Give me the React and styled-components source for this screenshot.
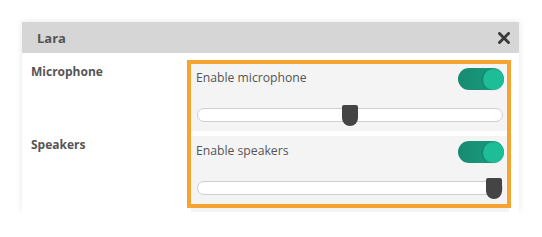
import React, { useState } from 'react';
import styled, { createGlobalStyle } from 'styled-components';

const GlobalStyle = createGlobalStyle`
  body {
    margin: 0;
    background: #fff;
    font-family: "Open Sans", "Liberation Sans", sans-serif;
  }
`;

const Page = styled.div`
  padding: 22px 0 0 22px;
`;

const Dialog = styled.div`
  position: relative;
  width: 497px;
  background: #fff;
  box-shadow: 0 0 7px rgba(0, 0, 0, 0.1);
`;

const Header = styled.div`
  height: 31px;
  display: flex;
  align-items: center;
  justify-content: space-between;
  padding: 0 9px 0 15px;
  background: #d6d6d6;
`;

const Title = styled.div`
  font-size: 13px;
  font-weight: 700;
  color: #555;
`;

const CloseButton = styled.button`
  display: flex;
  padding: 0;
  border: none;
  background: none;
  cursor: pointer;
`;

const Body = styled.div`
  display: grid;
  grid-template-columns: 160px 318px;
  row-gap: 5px;
  padding: 10px 10px 0 9px;
`;

const Label = styled.div`
  font-size: 12px;
  font-weight: 700;
  color: #555;
`;

const Panel = styled.div`
  background: #f4f4f4;
  padding: 4px 5px ${p => p.$bottom}px 5px;
`;

const ToggleRow = styled.div`
  display: flex;
  align-items: flex-start;
  justify-content: space-between;
`;

const ToggleText = styled.span`
  margin-top: 1.5px;
  font-size: 12.2px;
  color: #555;
`;

const Toggle = styled.button`
  position: relative;
  width: 46px;
  height: 22px;
  margin-top: 1px;
  padding: 0;
  border: none;
  border-radius: 11px;
  background: ${p => (p.$on ? 'linear-gradient(90deg, #178b70, #1a9f82)' : '#bbb')};
  cursor: pointer;

  &::after {
    content: '';
    position: absolute;
    top: 0.5px;
    left: ${p => (p.$on ? '25px' : '0')};
    width: 21px;
    height: 21px;
    border-radius: 50%;
    background: #1dbd98;
    box-shadow: -1px 0 2px rgba(0, 0, 0, 0.15);
  }
`;

const Slider = styled.div`
  position: relative;
  height: 21px;
  margin: 15px 1px 0;
`;

const Track = styled.div`
  position: absolute;
  top: 3px;
  left: 0;
  right: 0;
  height: 14px;
  box-sizing: border-box;
  border: 1px solid #cfcfcf;
  border-radius: 7px;
  background: #fff;
`;

const Thumb = styled.div`
  position: absolute;
  top: 0;
  width: 16px;
  height: 21px;
  border-radius: 2px 2px 8px 8px;
  background: #444;
`;

const Highlight = styled.div`
  position: absolute;
  left: 165px;
  top: 38px;
  width: 324px;
  height: 148px;
  box-sizing: border-box;
  border: 4px solid #f5a431;
  pointer-events: none;
`;

const CloseIcon = () => (
  <svg width="12" height="12" viewBox="0 0 12 12">
    <path d="M1.5 1.5 L10.5 10.5 M10.5 1.5 L1.5 10.5" stroke="#3a3a3a" strokeWidth="2.8" strokeLinecap="square" />
  </svg>
);

const devices = [
  { label: 'Microphone', text: 'Enable microphone', value: 0.5, bottom: 5 },
  { label: 'Speakers', text: 'Enable speakers', value: 1, bottom: 13 },
];

export default function App() {
  const [enabled, setEnabled] = useState([true, true]);

  return (
    <Page>
      <GlobalStyle />
      <Dialog>
        <Header>
          <Title>Lara</Title>
          <CloseButton aria-label="Close">
            <CloseIcon />
          </CloseButton>
        </Header>
        <Body>
          {devices.map((d, i) => (
            <React.Fragment key={d.label}>
              <Label>{d.label}</Label>
              <Panel $bottom={d.bottom}>
                <ToggleRow>
                  <ToggleText>{d.text}</ToggleText>
                  <Toggle
                    $on={enabled[i]}
                    onClick={() => setEnabled(e => e.map((v, j) => (j === i ? !v : v)))}
                  />
                </ToggleRow>
                <Slider>
                  <Track />
                  <Thumb style={{ left: `calc((100% - 18px) * ${d.value} + 1px)` }} />
                </Slider>
              </Panel>
            </React.Fragment>
          ))}
        </Body>
        <Highlight />
      </Dialog>
    </Page>
  );
}
